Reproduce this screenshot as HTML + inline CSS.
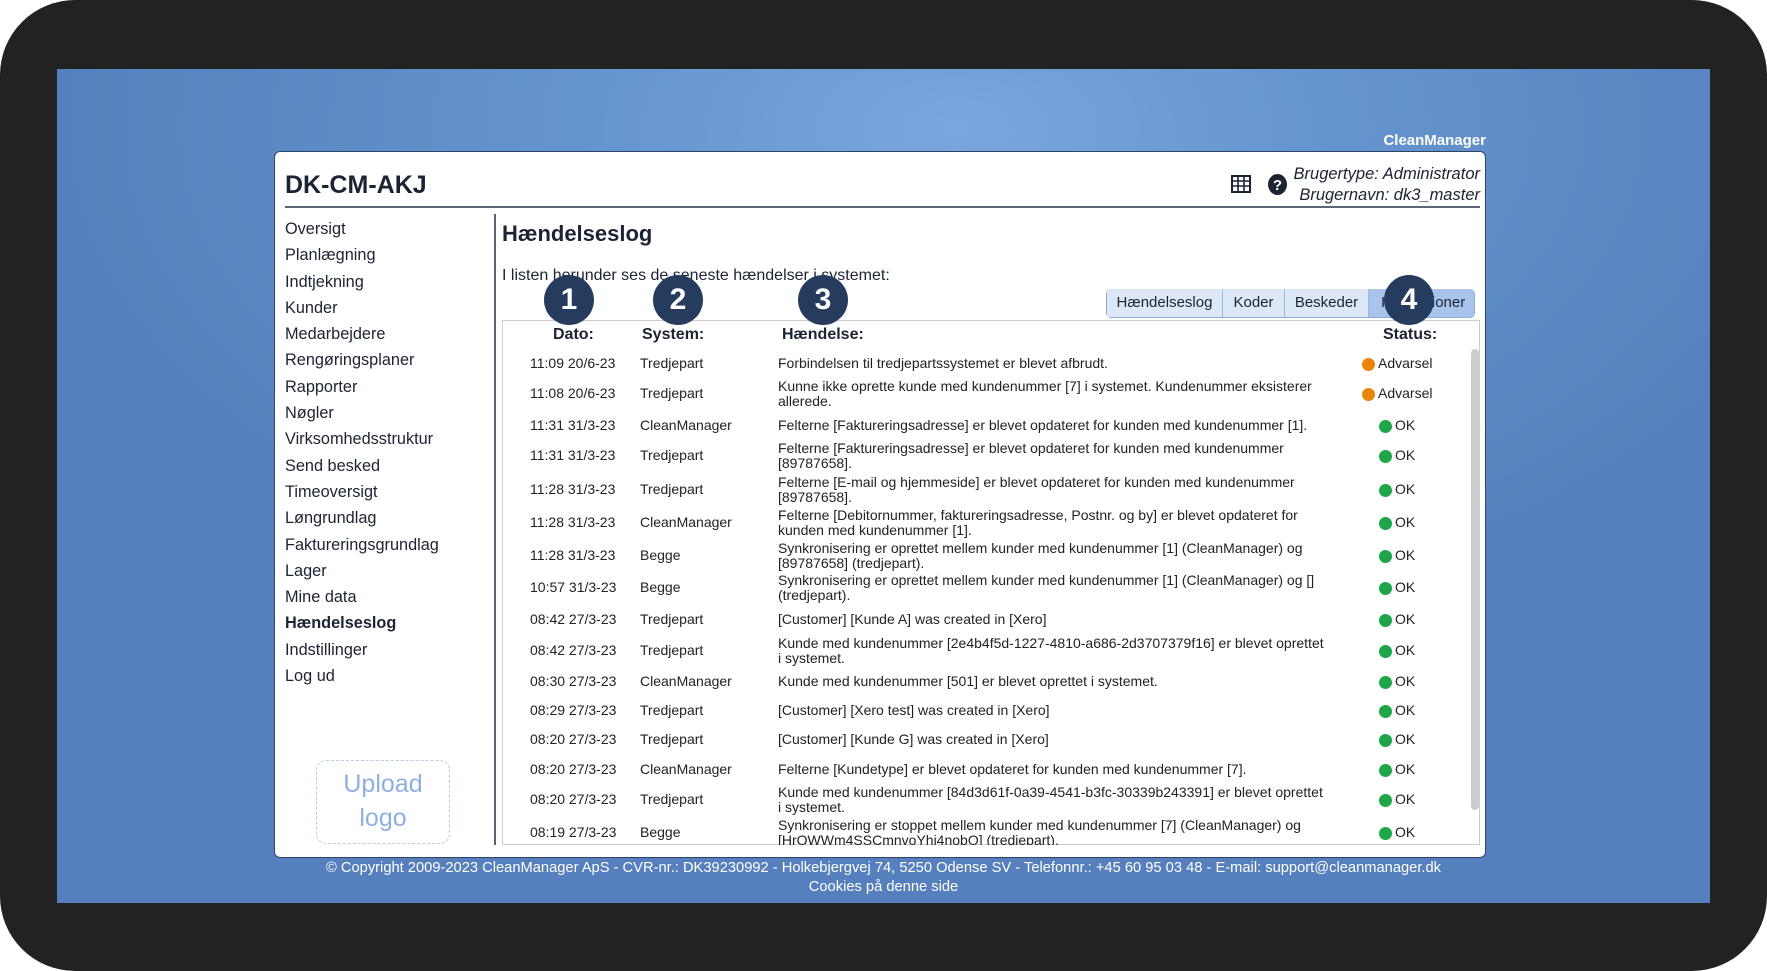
<!DOCTYPE html>
<html><head><meta charset="utf-8"><style>
*{margin:0;padding:0;box-sizing:border-box}
body{width:1767px;height:971px;background:#fff;position:relative;overflow:hidden;font-family:"Liberation Sans",Arial,sans-serif}
.frame{position:absolute;left:0;top:0;width:1767px;height:971px;background:#222;border-radius:75px}
.bg{position:absolute;left:57px;top:69px;width:1653px;height:834px;background:radial-gradient(ellipse 900px 500px at 900px 60px,#7aa6dc 0%,#6595cf 40%,#5580bd 100%)}
.a{position:absolute;white-space:nowrap}
.panel{position:absolute;left:274px;top:151px;width:1212px;height:707px;background:#fff;border-radius:6px;border:1px solid #2d4466}
.nav{font-size:16.3px;color:#1c2333}
.row{position:absolute;left:0;width:975px;height:30px;font-size:14px;color:#222}
.row div{position:absolute;top:0;height:30px;display:flex;align-items:center;line-height:15.5px;white-space:nowrap}
.row div.e{white-space:normal;width:548px}
.dot{width:13px;height:13px;border-radius:50%;display:inline-block;margin-right:3px}
.o{background:#e8860c}.g{background:#1fa64a}
.num{position:absolute;width:50px;height:50px;border-radius:50%;background:#263c5f;color:#fff;font-weight:bold;font-size:30px;text-align:center;line-height:50px}
.tab{position:absolute;top:289px;height:28px;font-size:15px;color:#1c2333;line-height:28px;text-align:center;background:#dde8f6;border-right:1px solid #9fb8dc}
</style></head><body>
<div class="frame"></div>
<div class="bg"></div>
<div class="a" style="left:1380px;top:132px;width:106px;text-align:right;color:#fff;font-weight:bold;font-size:15px">CleanManager</div>
<div class="panel"></div>
<div class="a" style="left:285px;top:171px;font-size:25px;font-weight:bold;color:#1c2333">DK-CM-AKJ</div>
<div class="a" style="left:285px;top:206px;width:1195px;height:2px;background:#5b6575"></div>
<svg class="a" style="left:1231px;top:175px" width="20" height="18" viewBox="0 0 20 18"><rect x="1" y="1" width="18" height="16" fill="none" stroke="#1c2333" stroke-width="2"/><path d="M1 6h18M1 11h18M7 1v16M13 1v16" stroke="#1c2333" stroke-width="1.6"/></svg>
<svg class="a" style="left:1268px;top:174px" width="19" height="21" viewBox="0 0 19 21"><ellipse cx="9.5" cy="10.5" rx="9.5" ry="10.5" fill="#1c2333"/><text x="9.5" y="16" font-size="15" font-weight="bold" fill="#fff" text-anchor="middle" font-family="Liberation Sans">?</text></svg>
<div class="a" style="left:1200px;top:164px;width:280px;text-align:right;font-style:italic;font-size:16.5px;color:#1c2333;line-height:21px">Brugertype: Administrator<br>Brugernavn: dk3_master</div>
<div class="a" style="left:494px;top:214px;width:2px;height:631px;background:#5b6575"></div>
<div class="a nav" style="left:285px;top:216px;line-height:26.3px">Oversigt<br>Planlægning<br>Indtjekning<br>Kunder<br>Medarbejdere<br>Rengøringsplaner<br>Rapporter<br>Nøgler<br>Virksomhedsstruktur<br>Send besked<br>Timeoversigt<br>Løngrundlag<br>Faktureringsgrundlag<br>Lager<br>Mine data<br><b>Hændelseslog</b><br>Indstillinger<br>Log ud</div>
<div class="a" style="left:316px;top:760px;width:134px;height:84px;border:1.5px dashed #b8cbe6;border-radius:10px;color:#8eb0e0;font-size:25px;text-align:center;line-height:34px;padding-top:6px">Upload<br>logo</div>
<div class="a" style="left:502px;top:221px;font-size:22px;font-weight:bold;color:#1c2333">Hændelseslog</div>
<div class="a" style="left:502px;top:267px;font-size:16px;color:#1c2333">I listen herunder ses de seneste hændelser i systemet:</div>
<div class="a" style="left:1106px;top:289px;width:369px;height:29px;border:1px solid #8eacd8;border-radius:5px;background:#dde8f6;overflow:hidden"></div>
<div class="tab" style="left:1107px;width:116px">Hændelseslog</div>
<div class="tab" style="left:1223px;width:62px">Koder</div>
<div class="tab" style="left:1285px;width:84px">Beskeder</div>
<div class="tab" style="left:1369px;width:105px;background:#a9c4ea;border-right:none;border-radius:0 4px 4px 0;text-align:left;padding-left:12px">Integrationer</div>
<div class="a" style="left:502px;top:320px;width:978px;height:525px;border:1px solid #ccc;overflow:hidden;background:#fff">
 <div class="a" style="left:0;top:5px;width:975px;font-size:16px;font-weight:bold;color:#1c2333">
  <span class="a" style="left:50px">Dato:</span><span class="a" style="left:139px">System:</span><span class="a" style="left:279px">Hændelse:</span><span class="a" style="left:880px">Status:</span>
 </div>
 <div class="a" style="left:968px;top:28px;width:8px;height:461px;background:#ccc;border-radius:4px"></div>
</div>
<div class="a" style="left:502px;top:320px;width:978px;height:525px;overflow:hidden">
<div class="row" style="top:29px"><div style="left:28px">11:09 20/6-23</div><div style="left:138px">Tredjepart</div><div class="e" style="left:276px">Forbindelsen til tredjepartssystemet er blevet afbrudt.</div><div style="left:860px"><span class="dot o"></span>Advarsel</div></div>
<div class="row" style="top:59px"><div style="left:28px">11:08 20/6-23</div><div style="left:138px">Tredjepart</div><div class="e" style="left:276px">Kunne ikke oprette kunde med kundenummer [7] i systemet. Kundenummer eksisterer allerede.</div><div style="left:860px"><span class="dot o"></span>Advarsel</div></div>
<div class="row" style="top:91px"><div style="left:28px">11:31 31/3-23</div><div style="left:138px">CleanManager</div><div class="e" style="left:276px">Felterne [Faktureringsadresse] er blevet opdateret for kunden med kundenummer [1].</div><div style="left:877px"><span class="dot g"></span>OK</div></div>
<div class="row" style="top:121px"><div style="left:28px">11:31 31/3-23</div><div style="left:138px">Tredjepart</div><div class="e" style="left:276px">Felterne [Faktureringsadresse] er blevet opdateret for kunden med kundenummer [89787658].</div><div style="left:877px"><span class="dot g"></span>OK</div></div>
<div class="row" style="top:155px"><div style="left:28px">11:28 31/3-23</div><div style="left:138px">Tredjepart</div><div class="e" style="left:276px">Felterne [E-mail og hjemmeside] er blevet opdateret for kunden med kundenummer [89787658].</div><div style="left:877px"><span class="dot g"></span>OK</div></div>
<div class="row" style="top:188px"><div style="left:28px">11:28 31/3-23</div><div style="left:138px">CleanManager</div><div class="e" style="left:276px">Felterne [Debitornummer, faktureringsadresse, Postnr. og by] er blevet opdateret for kunden med kundenummer [1].</div><div style="left:877px"><span class="dot g"></span>OK</div></div>
<div class="row" style="top:221px"><div style="left:28px">11:28 31/3-23</div><div style="left:138px">Begge</div><div class="e" style="left:276px">Synkronisering er oprettet mellem kunder med kundenummer [1] (CleanManager) og [89787658] (tredjepart).</div><div style="left:877px"><span class="dot g"></span>OK</div></div>
<div class="row" style="top:253px"><div style="left:28px">10:57 31/3-23</div><div style="left:138px">Begge</div><div class="e" style="left:276px">Synkronisering er oprettet mellem kunder med kundenummer [1] (CleanManager) og [] (tredjepart).</div><div style="left:877px"><span class="dot g"></span>OK</div></div>
<div class="row" style="top:285px"><div style="left:28px">08:42 27/3-23</div><div style="left:138px">Tredjepart</div><div class="e" style="left:276px">[Customer] [Kunde A] was created in [Xero]</div><div style="left:877px"><span class="dot g"></span>OK</div></div>
<div class="row" style="top:316px"><div style="left:28px">08:42 27/3-23</div><div style="left:138px">Tredjepart</div><div class="e" style="left:276px">Kunde med kundenummer [2e4b4f5d-1227-4810-a686-2d3707379f16] er blevet oprettet i systemet.</div><div style="left:877px"><span class="dot g"></span>OK</div></div>
<div class="row" style="top:347px"><div style="left:28px">08:30 27/3-23</div><div style="left:138px">CleanManager</div><div class="e" style="left:276px">Kunde med kundenummer [501] er blevet oprettet i systemet.</div><div style="left:877px"><span class="dot g"></span>OK</div></div>
<div class="row" style="top:376px"><div style="left:28px">08:29 27/3-23</div><div style="left:138px">Tredjepart</div><div class="e" style="left:276px">[Customer] [Xero test] was created in [Xero]</div><div style="left:877px"><span class="dot g"></span>OK</div></div>
<div class="row" style="top:405px"><div style="left:28px">08:20 27/3-23</div><div style="left:138px">Tredjepart</div><div class="e" style="left:276px">[Customer] [Kunde G] was created in [Xero]</div><div style="left:877px"><span class="dot g"></span>OK</div></div>
<div class="row" style="top:435px"><div style="left:28px">08:20 27/3-23</div><div style="left:138px">CleanManager</div><div class="e" style="left:276px">Felterne [Kundetype] er blevet opdateret for kunden med kundenummer [7].</div><div style="left:877px"><span class="dot g"></span>OK</div></div>
<div class="row" style="top:465px"><div style="left:28px">08:20 27/3-23</div><div style="left:138px">Tredjepart</div><div class="e" style="left:276px">Kunde med kundenummer [84d3d61f-0a39-4541-b3fc-30339b243391] er blevet oprettet i systemet.</div><div style="left:877px"><span class="dot g"></span>OK</div></div>
<div class="row" style="top:498px"><div style="left:28px">08:19 27/3-23</div><div style="left:138px">Begge</div><div class="e" style="left:276px">Synkronisering er stoppet mellem kunder med kundenummer [7] (CleanManager) og [HrOWWm4SSCmnvoYhi4nobO] (tredjepart).</div><div style="left:877px"><span class="dot g"></span>OK</div></div>
</div>
<div class="num" style="left:544px;top:275px">1</div>
<div class="num" style="left:653px;top:275px">2</div>
<div class="num" style="left:798px;top:275px">3</div>
<div class="num" style="left:1384px;top:275px">4</div>
<div class="a" style="left:0;top:859px;width:1767px;text-align:center;color:#fff;font-size:14.7px;line-height:19px">© Copyright 2009-2023 CleanManager ApS - CVR-nr.: DK39230992 - Holkebjergvej 74, 5250 Odense SV - Telefonnr.: +45 60 95 03 48 - E-mail: support@cleanmanager.dk<br>Cookies på denne side</div>
</body></html>
